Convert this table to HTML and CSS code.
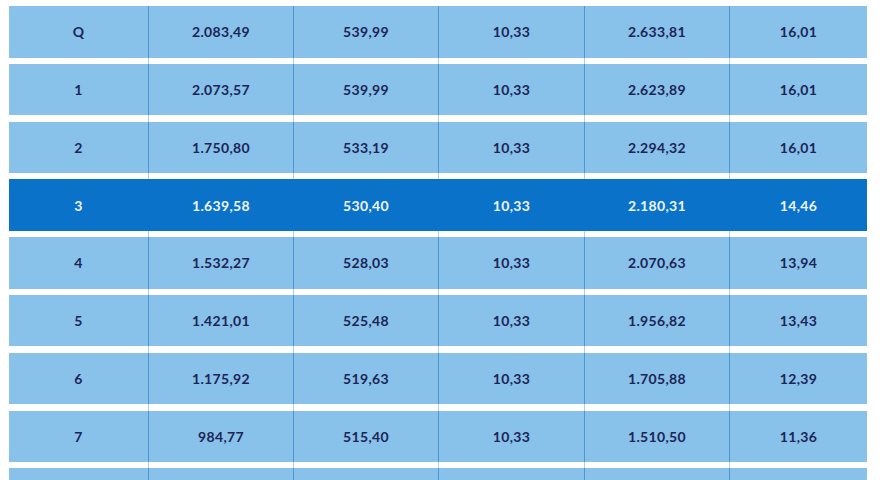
FILE: index.html
```html
<!DOCTYPE html>
<html>
<head>
<meta charset="utf-8">
<link rel="stylesheet" href="styles.css">
</head>
<body>
<div class="table">
  <div class="row"><div class="cell">Q</div><div class="cell">2.083,49</div><div class="cell">539,99</div><div class="cell">10,33</div><div class="cell">2.633,81</div><div class="cell">16,01</div></div>
  <div class="row"><div class="cell">1</div><div class="cell">2.073,57</div><div class="cell">539,99</div><div class="cell">10,33</div><div class="cell">2.623,89</div><div class="cell">16,01</div></div>
  <div class="row"><div class="cell">2</div><div class="cell">1.750,80</div><div class="cell">533,19</div><div class="cell">10,33</div><div class="cell">2.294,32</div><div class="cell">16,01</div></div>
  <div class="row active"><div class="cell">3</div><div class="cell">1.639,58</div><div class="cell">530,40</div><div class="cell">10,33</div><div class="cell">2.180,31</div><div class="cell">14,46</div></div>
  <div class="row"><div class="cell">4</div><div class="cell">1.532,27</div><div class="cell">528,03</div><div class="cell">10,33</div><div class="cell">2.070,63</div><div class="cell">13,94</div></div>
  <div class="row"><div class="cell">5</div><div class="cell">1.421,01</div><div class="cell">525,48</div><div class="cell">10,33</div><div class="cell">1.956,82</div><div class="cell">13,43</div></div>
  <div class="row"><div class="cell">6</div><div class="cell">1.175,92</div><div class="cell">519,63</div><div class="cell">10,33</div><div class="cell">1.705,88</div><div class="cell">12,39</div></div>
  <div class="row"><div class="cell">7</div><div class="cell">984,77</div><div class="cell">515,40</div><div class="cell">10,33</div><div class="cell">1.510,50</div><div class="cell">11,36</div></div>
  <div class="row"><div class="cell"></div><div class="cell"></div><div class="cell"></div><div class="cell"></div><div class="cell"></div><div class="cell"></div></div>
</div>
</body>
</html>
```
FILE: styles.css
```css
html, body {
  margin: 0;
  padding: 0;
  background: #ffffff;
  overflow: hidden;
}

.table {
  width: 858px;
  height: 474px;
  overflow: hidden;
  margin: 6px 0 0 9px;
  display: flex;
  flex-direction: column;
  gap: 6.3px;
  background-color: #ffffff;
  background-image:
    linear-gradient(#a9cdee, #a9cdee),
    linear-gradient(#a9cdee, #a9cdee),
    linear-gradient(#a9cdee, #a9cdee),
    linear-gradient(#a9cdee, #a9cdee),
    linear-gradient(#a9cdee, #a9cdee);
  background-size: 1px 100%;
  background-repeat: no-repeat;
  background-position: 139px 0, 284px 0, 429px 0, 575px 0, 720px 0;
}

.row {
  display: grid;
  grid-template-columns: 139px 145px 145px 146px 145px 138px;
  flex: 0 0 51.5px;
  height: 51.5px;
  background: #88c1e9;
  color: #1c2556;
  font-family: "Lato", "Open Sans", sans-serif;
  font-weight: 700;
  font-size: 14px;
  letter-spacing: 0.35px;
}

.row.active {
  background: #0b72c9;
  color: #eef5fc;
}

.cell {
  display: flex;
  align-items: center;
  justify-content: center;
}

.cell + .cell {
  border-left: 1px solid #4f95d4;
}

.row.active .cell + .cell {
  border-left-color: #0b72c9;
}
```
